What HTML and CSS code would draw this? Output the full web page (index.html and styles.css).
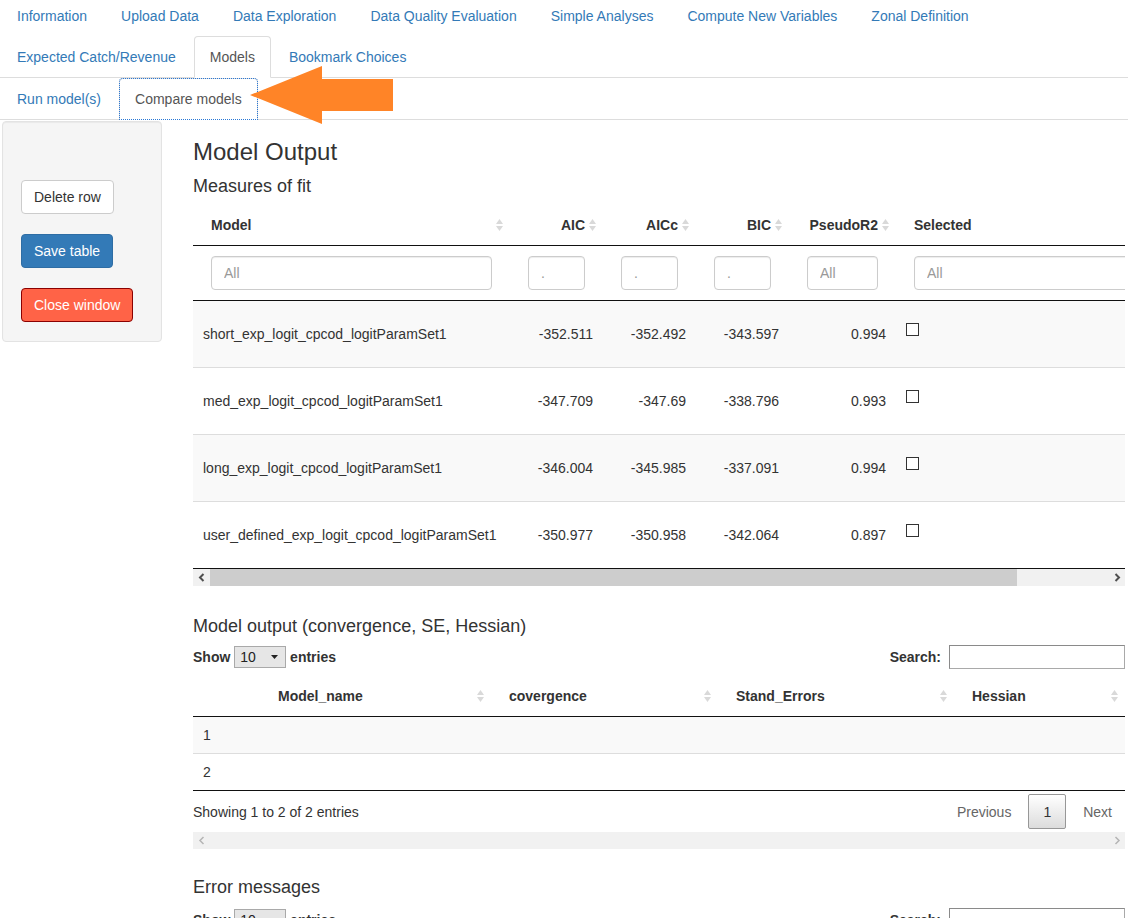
FILE: index.html
```html
<!DOCTYPE html>
<html>
<head>
<meta charset="utf-8">
<title>Compare models</title>
<link rel="stylesheet" href="styles.css">
</head>
<body>
<div class="page">
  <ul class="tabs main-tabs">
    <li><a>Information</a></li>
    <li><a>Upload Data</a></li>
    <li><a>Data Exploration</a></li>
    <li><a>Data Quality Evaluation</a></li>
    <li><a>Simple Analyses</a></li>
    <li><a>Compute New Variables</a></li>
    <li><a>Zonal Definition</a></li>
    <li><a>Expected Catch/Revenue</a></li>
    <li class="active"><a>Models</a></li>
    <li><a>Bookmark Choices</a></li>
  </ul>
  <ul class="tabs sub-tabs">
    <li><a>Run model(s)</a></li>
    <li class="active focused"><a>Compare models</a></li>
  </ul>

  <svg class="callout-arrow" width="144" height="60" viewBox="0 0 144 60">
    <polygon points="0,30 72,1 72,14 143,14 143,46 72,46 72,59" fill="#ff8427"/>
  </svg>

  <div class="layout">
    <aside class="well">
      <button class="btn btn-default">Delete row</button>
      <button class="btn btn-primary">Save table</button>
      <button class="btn btn-close">Close window</button>
    </aside>

    <main class="main">
      <h3 class="title">Model Output</h3>
      <h4 class="sub first">Measures of fit</h4>

      <div class="scroll-body">
        <table class="dt fit">
          <colgroup>
            <col class="w-model"><col class="w-num"><col class="w-num"><col class="w-num"><col class="w-r2"><col class="w-sel">
          </colgroup>
          <thead>
            <tr class="head-row">
              <th class="left">Model<svg class="sort" width="7" height="14" viewBox="0 0 7 14"><polygon points="0,6 3.5,1 7,6"/><polygon points="0,8 3.5,13 7,8"/></svg></th>
              <th class="right">AIC<svg class="sort" width="7" height="14" viewBox="0 0 7 14"><polygon points="0,6 3.5,1 7,6"/><polygon points="0,8 3.5,13 7,8"/></svg></th>
              <th class="right">AICc<svg class="sort" width="7" height="14" viewBox="0 0 7 14"><polygon points="0,6 3.5,1 7,6"/><polygon points="0,8 3.5,13 7,8"/></svg></th>
              <th class="right">BIC<svg class="sort" width="7" height="14" viewBox="0 0 7 14"><polygon points="0,6 3.5,1 7,6"/><polygon points="0,8 3.5,13 7,8"/></svg></th>
              <th class="right">PseudoR2<svg class="sort" width="7" height="14" viewBox="0 0 7 14"><polygon points="0,6 3.5,1 7,6"/><polygon points="0,8 3.5,13 7,8"/></svg></th>
              <th class="left">Selected</th>
            </tr>
            <tr class="filter-row">
              <td><input class="filter" placeholder="All"></td>
              <td><input class="filter" placeholder="."></td>
              <td><input class="filter" placeholder="."></td>
              <td><input class="filter" placeholder="."></td>
              <td><input class="filter" placeholder="All"></td>
              <td><input class="filter" placeholder="All"></td>
            </tr>
          </thead>
          <tbody>
            <tr class="odd">
              <td>short_exp_logit_cpcod_logitParamSet1</td>
              <td class="right">-352.511</td><td class="right">-352.492</td><td class="right">-343.597</td><td class="right">0.994</td>
              <td class="cb-cell"><span class="cb"></span></td>
            </tr>
            <tr>
              <td>med_exp_logit_cpcod_logitParamSet1</td>
              <td class="right">-347.709</td><td class="right">-347.69</td><td class="right">-338.796</td><td class="right">0.993</td>
              <td class="cb-cell"><span class="cb"></span></td>
            </tr>
            <tr class="odd">
              <td>long_exp_logit_cpcod_logitParamSet1</td>
              <td class="right">-346.004</td><td class="right">-345.985</td><td class="right">-337.091</td><td class="right">0.994</td>
              <td class="cb-cell"><span class="cb"></span></td>
            </tr>
            <tr class="last">
              <td>user_defined_exp_logit_cpcod_logitParamSet1</td>
              <td class="right">-350.977</td><td class="right">-350.958</td><td class="right">-342.064</td><td class="right">0.897</td>
              <td class="cb-cell"><span class="cb"></span></td>
            </tr>
          </tbody>
        </table>
      </div>
      <div class="hscroll">
        <span class="hs-btn"><svg width="8" height="9" viewBox="0 0 8 9"><polyline points="5.5,1 2,4.5 5.5,8" fill="none" stroke="#505050" stroke-width="2"/></svg></span>
        <span class="hs-thumb"></span>
        <span class="hs-track"></span>
        <span class="hs-btn"><svg width="8" height="9" viewBox="0 0 8 9"><polyline points="2.5,1 6,4.5 2.5,8" fill="none" stroke="#505050" stroke-width="2"/></svg></span>
      </div>

      <h4 class="sub section">Model output (convergence, SE, Hessian)</h4>
      <div class="dt-controls">
        <label class="length">Show <span class="select">10<svg class="caret" width="7" height="4" viewBox="0 0 7 4"><polygon points="0,0 7,0 3.5,4" fill="#222"/></svg></span> entries</label>
        <label class="search">Search:<span class="search-box"></span></label>
      </div>
      <table class="dt out">
        <colgroup>
          <col class="c0"><col class="c1"><col class="c2"><col class="c3"><col class="c4">
        </colgroup>
        <thead>
          <tr class="head-row">
            <th></th>
            <th class="left">Model_name<svg class="sort" width="7" height="14" viewBox="0 0 7 14"><polygon points="0,6 3.5,1 7,6"/><polygon points="0,8 3.5,13 7,8"/></svg></th>
            <th class="left">covergence<svg class="sort" width="7" height="14" viewBox="0 0 7 14"><polygon points="0,6 3.5,1 7,6"/><polygon points="0,8 3.5,13 7,8"/></svg></th>
            <th class="left">Stand_Errors<svg class="sort" width="7" height="14" viewBox="0 0 7 14"><polygon points="0,6 3.5,1 7,6"/><polygon points="0,8 3.5,13 7,8"/></svg></th>
            <th class="left">Hessian<svg class="sort" width="7" height="14" viewBox="0 0 7 14"><polygon points="0,6 3.5,1 7,6"/><polygon points="0,8 3.5,13 7,8"/></svg></th>
          </tr>
        </thead>
        <tbody>
          <tr class="odd"><td>1</td><td></td><td></td><td></td><td></td></tr>
          <tr class="last"><td>2</td><td></td><td></td><td></td><td></td></tr>
        </tbody>
      </table>
      <div class="dt-footer">
        <div class="info">Showing 1 to 2 of 2 entries</div>
        <div class="pager">
          <span class="pg disabled">Previous</span>
          <span class="pg current">1</span>
          <span class="pg disabled">Next</span>
        </div>
      </div>
      <div class="hscroll light">
        <span class="hs-btn"><svg width="8" height="9" viewBox="0 0 8 9"><polyline points="5.5,1 2,4.5 5.5,8" fill="none" stroke="#b5b5b5" stroke-width="1.5"/></svg></span>
        <span class="hs-track"></span>
        <span class="hs-btn"><svg width="8" height="9" viewBox="0 0 8 9"><polyline points="2.5,1 6,4.5 2.5,8" fill="none" stroke="#b5b5b5" stroke-width="1.5"/></svg></span>
      </div>

      <h4 class="sub section last-section">Error messages</h4>
      <div class="dt-controls">
        <label class="length">Show <span class="select">10<svg class="caret" width="7" height="4" viewBox="0 0 7 4"><polygon points="0,0 7,0 3.5,4" fill="#222"/></svg></span> entries</label>
        <label class="search">Search:<span class="search-box"></span></label>
      </div>
    </main>
  </div>
</div>
</body>
</html>
```
FILE: styles.css
```css
html, body {
  margin: 0;
  padding: 0;
  overflow: hidden;
  background: #fff;
}
body {
  font-family: "Liberation Sans", Arial, Helvetica, sans-serif;
  font-size: 14px;
  line-height: 20px;
  color: #333;
}
.page {
  position: relative;
}

/* tabs */
.tabs {
  display: flex;
  flex-wrap: wrap;
  list-style: none;
  margin: 0;
  padding: 0 0 0 1px;
  border-bottom: 1px solid #ddd;
}
.main-tabs {
  margin-top: -5px;
}
.tabs li {
  margin-bottom: -1px;
}
.tabs a {
  display: block;
  padding: 10px 15px;
  margin-right: 2px;
  border: 1px solid transparent;
  border-radius: 4px 4px 0 0;
  line-height: 20px;
  color: #337ab7;
  cursor: pointer;
}
.tabs li.active a {
  color: #555;
  background: #fff;
  border-color: #ddd #ddd transparent;
}
.tabs li.focused a {
  outline: 1px dotted #2a78d6;
  outline-offset: -1px;
}

.callout-arrow {
  position: absolute;
  left: 250px;
  top: 70px;
}

/* layout */
.layout {
  display: flex;
  align-items: flex-start;
  gap: 31px;
  padding: 0 3px 0 2px;
}
.well {
  flex: 0 0 160px;
  box-sizing: border-box;
  margin-top: 1px;
  padding: 58px 18px 19px;
  background: #f5f5f5;
  border: 1px solid #e3e3e3;
  border-radius: 4px;
  box-shadow: inset 0 1px 1px rgba(0,0,0,0.05);
  display: flex;
  flex-direction: column;
  align-items: flex-start;
  gap: 20px;
}
.btn {
  font-family: inherit;
  font-size: 14px;
  line-height: 20px;
  height: 34px;
  box-sizing: border-box;
  padding: 6px 12px;
  border: 1px solid #ccc;
  border-radius: 4px;
  background: #fff;
  color: #333;
  margin: 0;
}
.btn-primary {
  background: #337ab7;
  border-color: #2e6da4;
  color: #fff;
}
.btn-close {
  background: #ff6347;
  border-color: #8b0000;
  color: #fff;
}

.main {
  flex: 1 1 auto;
  min-width: 0;
}
.title {
  font-size: 24px;
  font-weight: normal;
  line-height: 1.1;
  margin: 19px 0 10px;
  color: #333;
}
.sub {
  font-size: 18px;
  font-weight: normal;
  line-height: 1.1;
  margin: 10px 0;
  color: #333;
}
.sub.first {
  margin-top: 12px;
  margin-bottom: 8px;
}
.sub.section {
  margin-top: 31px;
  margin-bottom: 8px;
}
.sub.section.last-section {
  margin-top: 29px;
  margin-bottom: 10px;
}

/* data tables */
.scroll-body {
  overflow: hidden;
}
.dt {
  border-collapse: separate;
  border-spacing: 0;
  table-layout: fixed;
}
.fit {
  width: 1037px;
}
.out {
  width: 100%;
  margin-top: 7px;
}
.w-model { width: 317px; }
.w-num { width: 93px; }
.w-r2 { width: 107px; }
.w-sel { width: 334px; }
.c0 { width: 67px; }
.c1 { width: 231px; }
.c2 { width: 227px; }
.c3 { width: 236px; }
.c4 { width: 171px; }

.dt th {
  position: relative;
  padding: 10px 18px;
  font-weight: bold;
  line-height: 20px;
  white-space: nowrap;
  border-bottom: 1px solid #111;
}
.dt .left { text-align: left; }
.dt .right { text-align: right; }
.sort {
  position: absolute;
  right: 7px;
  top: 13px;
  fill: #d9d9d9;
}
.filter-row td {
  padding: 10px 18px;
  border-bottom: 1px solid #111;
}
.filter {
  display: block;
  width: 100%;
  height: 34px;
  box-sizing: border-box;
  padding: 6px 12px;
  border: 1px solid #ccc;
  border-radius: 4px;
  font-family: inherit;
  font-size: 14px;
  color: #555;
  background: #fff;
  box-shadow: inset 0 1px 1px rgba(0,0,0,0.075);
}
.filter::placeholder {
  color: #999;
}
.fit tbody td {
  padding: 23px 10px;
  line-height: 20px;
  white-space: nowrap;
  vertical-align: middle;
  border-top: 1px solid #ddd;
}
.dt tbody tr:first-child td {
  border-top: none;
}
.dt tbody tr.odd td {
  background: #f9f9f9;
}
.dt tbody tr.last td {
  border-bottom: 1px solid #111;
}
.fit tbody td.cb-cell {
  vertical-align: top;
  padding: 22px 10px 0;
}
.cb {
  display: block;
  width: 13px;
  height: 13px;
  box-sizing: border-box;
  border: 1px solid #333;
  background: #fff;
}
.out tbody td {
  padding: 8px 10px;
  line-height: 20px;
  border-top: 1px solid #ddd;
}

/* fake horizontal scrollbar */
.hscroll {
  display: flex;
  height: 17px;
  background: #f1f1f1;
}
.hs-btn {
  flex: 0 0 17px;
  display: flex;
  align-items: center;
  justify-content: center;
}
.hs-thumb {
  flex: 0 0 807px;
  background: #cdcdcd;
}
.hs-track {
  flex: 1 1 auto;
}

/* controls */
.dt-controls {
  display: flex;
  justify-content: space-between;
  align-items: center;
  height: 24px;
}
.length, .search {
  font-weight: bold;
  display: flex;
  align-items: center;
  white-space: pre;
}
.select {
  display: inline-flex;
  align-items: center;
  justify-content: space-between;
  width: 52px;
  height: 22px;
  box-sizing: border-box;
  padding: 0 7px 0 5px;
  border: 1px solid #a9a9a9;
  background: #e6e6e6;
  font-weight: normal;
  color: #222;
}
.search-box {
  display: inline-block;
  width: 176px;
  height: 24px;
  box-sizing: border-box;
  margin-left: 8px;
  border: 1px solid #a9a9a9;
  border-top-color: #8a8a8a;
  border-left-color: #8a8a8a;
  background: #fff;
}

.dt-footer {
  display: flex;
  justify-content: space-between;
  align-items: center;
  height: 41px;
  padding-top: 1px;
  box-sizing: border-box;
}
.pager {
  display: flex;
  align-items: center;
  margin-right: -2px;
}
.pg {
  padding: 7px 14px;
  margin-left: 2px;
  border: 1px solid transparent;
  border-radius: 2px;
  line-height: 20px;
  color: #333;
}
.pg.disabled {
  color: #666;
}
.pg.current {
  border-color: #979797;
  background: linear-gradient(to bottom, #ffffff 0%, #dcdcdc 100%);
  padding: 7px 14px 6px;
}
```
